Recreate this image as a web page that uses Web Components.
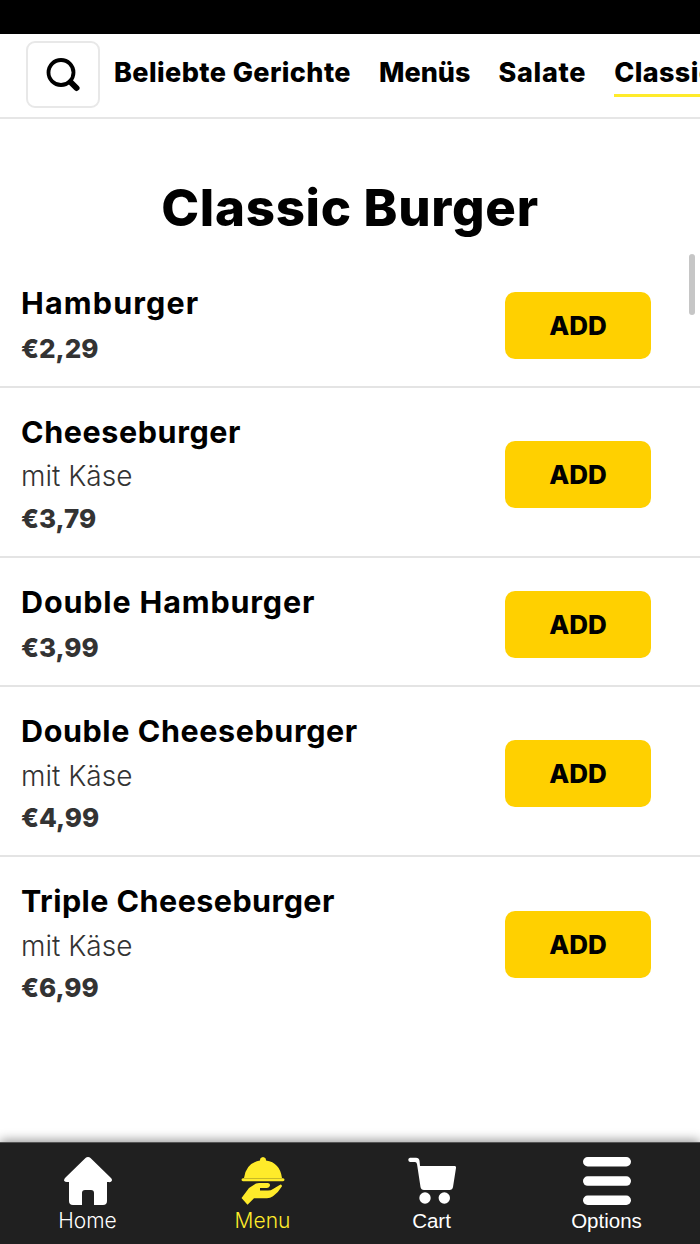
<!DOCTYPE html>
<html lang="de"><head><meta charset="utf-8"><title>Classic Burger</title>
<style>
html,body{margin:0;height:100%;background:#fff}
body{font-family:Inter,"Liberation Sans",sans-serif;color:#000}
app-shell{height:1244px}
</style></head><body>
<app-shell>
 <top-nav slot="top">
  <nav-tab>Beliebte Gerichte</nav-tab><nav-tab style="--ls:0">Menüs</nav-tab><nav-tab style="--ls:.7px">Salate</nav-tab><nav-tab active>Classic Burger</nav-tab>
 </top-nav>
 <section-title>Classic Burger</section-title>
 <menu-item style="--ls:1.15px" name="Hamburger" price="€2,29"></menu-item>
 <menu-item name="Cheeseburger" desc="mit Käse" price="€3,79"></menu-item>
 <menu-item style="--ls:.85px" name="Double Hamburger" price="€3,99"></menu-item>
 <menu-item name="Double Cheeseburger" desc="mit Käse" price="€4,99"></menu-item>
 <menu-item style="--ls:.45px" name="Triple Cheeseburger" desc="mit Käse" price="€6,99" last></menu-item>
 <bottom-nav slot="bottom"></bottom-nav>
</app-shell>
<script>
function def(name,html,init){customElements.define(name,class extends HTMLElement{constructor(){super();this.attachShadow({mode:'open'}).innerHTML=typeof html==='function'?html(this):html}connectedCallback(){if(init)init(this)}})}
def('app-shell',`<style>
:host{display:flex;flex-direction:column;width:700px;overflow:hidden}
.status{height:34px;background:#000;flex:none}
main{flex:1;min-height:0;position:relative;overflow:hidden;display:flex;flex-direction:column}
.thumb{position:absolute;left:689px;top:135px;width:6px;height:61px;border-radius:3px;background:#c6c6c6}
</style><div class="status"></div><slot name="top"></slot><main><slot></slot><div class="thumb"></div></main><slot name="bottom"></slot>`);
def('top-nav',`<style>
:host{display:flex;flex:none;height:83px;box-sizing:content-box;border-bottom:2px solid #e6e6e6;overflow:hidden;align-items:flex-start}
.s{flex:none;box-sizing:border-box;width:74px;height:67px;margin:7px 14px 0 26px;border:2px solid #e8e8e8;border-radius:9px;display:flex;align-items:center;justify-content:center}
.t{display:flex;gap:28px;flex:none}
</style><div class="s"><svg width="36" height="36" viewBox="0 0 36 36"><circle cx="16" cy="15.500" r="12.500" fill="none" stroke="#000" stroke-width="3.800"/><path d="M25.500 25l6 6" stroke="#000" stroke-width="6" stroke-linecap="round"/></svg></div><div class="t"><slot></slot></div>`);
def('nav-tab',`<style>
:host{display:block;flex:none;height:63px;box-sizing:border-box;padding-top:22px;font:800 27px/34px Inter,sans-serif;letter-spacing:var(--ls,.4px);white-space:nowrap;color:#000}
:host([active]){border-bottom:3px solid #ffeb2a}
</style><slot></slot>`);
def('section-title',`<style>
:host{display:block;text-align:center;font:800 51px/60px Inter,sans-serif;letter-spacing:.7px;padding-top:59px;height:81.200px;color:#000}
</style><slot></slot>`);
def('menu-item',el=>{const g=a=>el.getAttribute(a);const d=g('desc');return `<style>
:host{display:flex;flex:none;justify-content:space-between;align-items:center;box-sizing:border-box;padding:20px 49px 16.300px 21px;border-bottom:2px solid #e4e4e4}
:host([last]){border-bottom:none}
.n{font:700 30.500px/47px Inter,sans-serif;letter-spacing:var(--ls,.6px);color:#000;margin-bottom:1.500px}
.d{font:300 28px/41.500px Inter,sans-serif;color:#333}
.p{font:800 26px/42px Inter,sans-serif;color:#333}
button{width:146px;height:67px;border:0;border-radius:10px;background:#ffd000;color:#000;font:800 26px Inter,sans-serif;padding:0;margin-top:1.500px}
</style><div><div class="n">${g('name')}</div>${d?`<div class="d">${d}</div>`:''}<div class="p">${g('price')}</div></div><button>ADD</button>`});
def('bottom-nav',`<style>
:host{display:flex;flex:none;height:102px;background:#202020;box-shadow:0 -2px 10px rgba(0,0,0,.4);border-top:1px solid #555;box-sizing:border-box;position:relative}
.i{width:175px;display:flex;flex-direction:column;align-items:center;padding-top:14px;color:#fff;font:300 21px/26px Inter,sans-serif;gap:3px}
.i svg{display:block;width:48px;height:48px}
.y{color:#ffeb2a}.a{font:400 20.500px/26px "Liberation Sans",sans-serif;transform:translateX(-6px)}
</style>
<div class="i"><svg viewBox="0 0 48 48"><path fill="#fff" d="M24 0q1.500 0 2.500 1L47 21q1.500 1.500.7 3t-3 1H43V44q0 4-4 4H30V36q0-3-3-3h-6q-3 0-3 3V48H9q-4 0-4-4V25H3q-2 0-2.700-1t.7-3L21.500 1q1-1 2.500-1z"/></svg>Home</div>
<div class="i y"><svg viewBox="0 0 48 48"><path fill="#ffeb2a" d="M24 0a3.500 3.500 0 0 1 3 3.500q14 2 16 17.500H5Q7 6 21 3.500A3.500 3.500 0 0 1 24 0zM4 21.300h40q1.500.2 1.500 1.500t-1.500 1.500H4q-1.500-.2-1.500-1.500T4 21.300zM10 31l7-4.500q2-.7 4-.5h8q2.500 .5 2 2.500T28 31h-7v2.500h8q3 0 5-1.500l7.500-4.500q1.500 0 1.500 1.700-3.500 6-9 10-3 2-6 2H15l-6.500 6.500L2.500 41z"/></svg>Menu</div>
<div class="i a"><svg viewBox="0 0 48 48"><path fill="#fff" d="M2 .7h6q3 0 3.500 3L12 9H46.500q1.800 0 1.500 2L45 30q-.5 3-3.500 3H16q-3 0-3.500-3L9 7q-.5-2-2-2H2a2.200 2.200 0 0 1 0-4.300z"/><circle cx="17" cy="41" r="5.700" fill="#fff"/><circle cx="36.300" cy="41" r="5.700" fill="#fff"/></svg>Cart</div>
<div class="i a"><svg viewBox="0 0 48 48"><g fill="#fff"><rect x="0" y="0" width="48" height="9.500" rx="4.700"/><rect x="0" y="19.300" width="48" height="9.500" rx="4.700"/><rect x="0" y="38.500" width="48" height="9.500" rx="4.700"/></g></svg>Options</div>`);
</script>
</body></html>
